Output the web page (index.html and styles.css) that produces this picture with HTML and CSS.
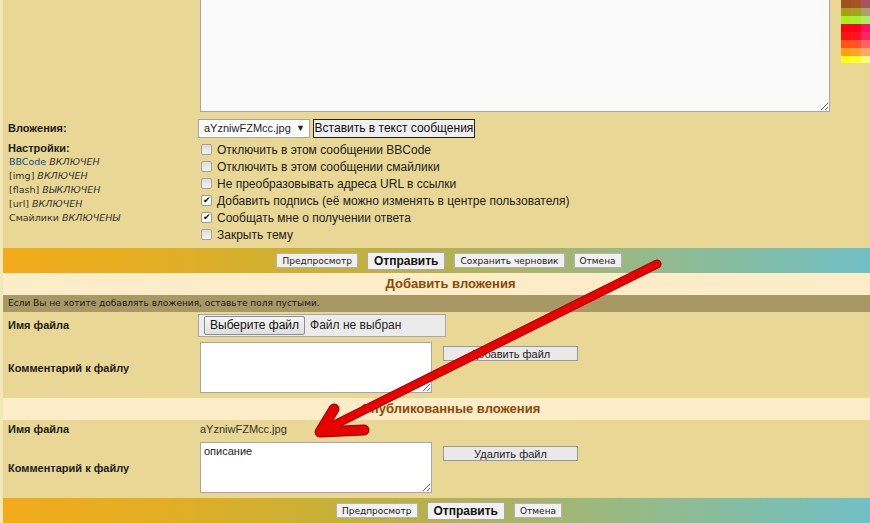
FILE: index.html
```html
<!DOCTYPE html>
<html lang="ru">
<head>
	<meta charset="utf-8">
	<title>Вложения</title>
	<link rel="stylesheet" href="styles.css">
</head>
<body>
<div class="page">

<!-- message box and colour palette -->
<div class="row post-row">
	<div class="label"></div>
	<textarea class="post-box"></textarea>
	<div class="palette">
		<span style="background:#a0501a"></span><span style="background:#a45226"></span><span style="background:#a4545e"></span>
		<span style="background:#a8a012"></span><span style="background:#a8a224"></span><span style="background:#aaa46a"></span>
		<span style="background:#a2f21e"></span><span style="background:#a4f22e"></span><span style="background:#a8f262"></span>
		<span style="background:#ff0010"></span><span style="background:#ff0024"></span><span style="background:#ff1060"></span>
		<span style="background:#ff1212"></span><span style="background:#ff1424"></span><span style="background:#ff2462"></span>
		<span style="background:#ff5214"></span><span style="background:#ff5426"></span><span style="background:#ff6464"></span>
		<span style="background:#ffa012"></span><span style="background:#ffa226"></span><span style="background:#ffa866"></span>
		<span style="background:#ffff12"></span><span style="background:#ffff28"></span><span style="background:#ffff74"></span>
	</div>
</div>

<div class="row attach-row">
	<div class="label">Вложения:</div>
	<span class="select">aYzniwFZMcc.jpg <span class="caret">▼</span></span>
	<button class="btn-insert">Вставить в текст сообщения</button>
</div>

<!-- post options -->
<div class="row options-row">
	<div class="label">
		<div>Настройки:</div>
		<ul class="status">
			<li><span class="link">BBCode</span> <i>ВКЛЮЧЕН</i></li>
			<li>[img] <i>ВКЛЮЧЕН</i></li>
			<li>[flash] <i>ВЫКЛЮЧЕН</i></li>
			<li>[url] <i>ВКЛЮЧЕН</i></li>
			<li>Смайлики <i>ВКЛЮЧЕНЫ</i></li>
		</ul>
	</div>
	<ul class="options">
		<li><span class="check"></span>Отключить в этом сообщении BBCode</li>
		<li><span class="check"></span>Отключить в этом сообщении смайлики</li>
		<li><span class="check"></span>Не преобразовывать адреса URL в ссылки</li>
		<li><span class="check checked">✔</span>Добавить подпись (её можно изменять в центре пользователя)</li>
		<li><span class="check checked">✔</span>Сообщать мне о получении ответа</li>
		<li><span class="check"></span>Закрыть тему</li>
	</ul>
</div>

<div class="bar">
	<button class="btn-small">Предпросмотр</button>
	<button class="btn-send">Отправить</button>
	<button class="btn-small">Сохранить черновик</button>
	<button class="btn-small">Отмена</button>
</div>

<!-- new attachment -->
<h3 class="cat">Добавить вложения</h3>
<div class="hint">Если Вы не хотите добавлять вложения, оставьте поля пустыми.</div>

<div class="row file-row">
	<div class="label">Имя файла</div>
	<div class="file-box"><span class="file-btn">Выберите файл</span>Файл не выбран</div>
</div>
<div class="row comment-row">
	<div class="label">Комментарий к файлу</div>
	<textarea class="comment-box"></textarea>
	<button class="btn-wide">Добавить файл</button>
</div>

<!-- posted attachments -->
<h3 class="cat">Опубликованные вложения</h3>
<div class="row name-row">
	<div class="label">Имя файла</div>
	<span class="file-name">aYzniwFZMcc.jpg</span>
</div>
<div class="row comment-row">
	<div class="label">Комментарий к файлу</div>
	<textarea class="comment-box">описание</textarea>
	<button class="btn-wide">Удалить файл</button>
</div>

<div class="bar">
	<button class="btn-small">Предпросмотр</button>
	<button class="btn-send">Отправить</button>
	<button class="btn-small">Отмена</button>
</div>

<!-- red annotation arrow drawn over the form -->
<svg class="arrow" viewBox="0 0 870 523" width="870" height="523">
	<g fill="none" stroke="#a00000" stroke-linecap="round" stroke-linejoin="round">
		<path d="M657 264 L322 431" stroke-width="9"/>
		<path d="M334 409 L320 432 L364 430" stroke-width="11"/>
	</g>
	<g fill="none" stroke="#e80000" stroke-linecap="round" stroke-linejoin="round">
		<path d="M657 264 L322 431" stroke-width="7"/>
		<path d="M334 409 L320 432 L364 430" stroke-width="9"/>
	</g>
</svg>

</div>
</body>
</html>
```

FILE: styles.css
```css
html, body {
	margin: 0;
	padding: 0;
}
body {
	background: #f1e7b8;
	overflow: hidden;
	font-family: "Liberation Sans", Arial, sans-serif;
	color: #222;
}
.page {
	position: relative;
	margin-left: 3px;
	width: 895px;
	background: #e8d795;
}
.row {
	display: flex;
	align-items: center;
}
.label {
	box-sizing: border-box;
	flex: 0 0 195px;
	padding-left: 5px;
	font-size: 11px;
	font-weight: bold;
	color: #1c1c1c;
}
button {
	font-family: "Liberation Sans", Arial, sans-serif;
	margin: 0;
	cursor: pointer;
}

/* message box */
.post-row {
	height: 112px;
	align-items: flex-start;
}
.post-box {
	box-sizing: border-box;
	margin: 0 0 0 2px;
	width: 630px;
	height: 112px;
	border: 1px solid #a6a6a6;
	border-top: none;
	background: #fafafa;
}
.palette {
	margin-left: 11px;
	display: grid;
	grid-template-columns: repeat(3, 10px);
	grid-auto-rows: 8px;
	height: 63px;
	overflow: hidden;
}

/* attachments select */
.attach-row {
	margin-top: 5px;
	height: 22px;
}
.select {
	box-sizing: border-box;
	display: flex;
	align-items: center;
	justify-content: space-between;
	width: 112px;
	height: 19px;
	padding: 0 4px 0 5px;
	border: 1px solid #a4a4a4;
	background: #fff;
	font-size: 11px;
	color: #222;
}
.caret {
	font-size: 9px;
}
.btn-insert {
	box-sizing: border-box;
	margin-left: 3px;
	width: 162px;
	height: 19px;
	padding: 0;
	border: 1px solid #222;
	background: #efefef;
	font-size: 12px;
	color: #111;
}

/* options */
.options-row {
	margin-top: 2px;
	height: 107px;
	align-items: flex-start;
}
.options-row .label {
	line-height: 14px;
}
.status {
	list-style: none;
	margin: 0;
	padding: 0 0 0 1px;
	font-family: "DejaVu Sans", Verdana, sans-serif;
	font-size: 9.5px;
	font-weight: normal;
	color: #333;
}
.status .link {
	color: #105289;
}
.options {
	list-style: none;
	margin: 0 0 0 3px;
	padding: 0;
	font-size: 12px;
	color: #222;
}
.options li {
	display: flex;
	align-items: center;
	height: 17px;
}
.check {
	box-sizing: border-box;
	display: inline-flex;
	align-items: center;
	justify-content: center;
	width: 11px;
	height: 11px;
	margin-right: 5px;
	border: 1px solid #a2a2a2;
	border-radius: 2px;
	background: linear-gradient(#dcdcdc, #f4f4f4);
	font-size: 9px;
	line-height: 1;
	color: #111;
}
.check.checked {
	background: #fff;
	border-color: #9a9a9a;
}

/* button bars */
.bar {
	display: flex;
	align-items: center;
	justify-content: center;
	gap: 9px;
	height: 25px;
	padding-right: 3px;
	background: linear-gradient(to right, #f2ab1a 0%, #e2ae24 18%, #ccb034 33%, #b8b04a 47%, #a6b46e 60%, #90bb92 75%, #80bdaa 85%, #6cc0cc 100%);
}
.btn-small {
	box-sizing: border-box;
	height: 15px;
	padding: 0 5px;
	border: 1px solid #b3b3b3;
	background: #f1f1f1;
	font-family: "DejaVu Sans", Verdana, sans-serif;
	font-size: 9px;
	color: #222;
}
.btn-send {
	box-sizing: border-box;
	height: 18px;
	padding: 0 6px;
	border: 1px solid #a9a9a9;
	background: #f1f1f1;
	font-size: 12px;
	font-weight: bold;
	color: #111;
}

/* section headers */
.cat {
	margin: 0;
	height: 22px;
	line-height: 22px;
	text-align: center;
	background: #fcecc7;
	color: #8b4a08;
	font-size: 13px;
	font-weight: bold;
}
.hint {
	box-sizing: border-box;
	height: 17px;
	line-height: 17px;
	padding-left: 5px;
	background: #a89964;
	font-family: "DejaVu Sans", Verdana, sans-serif;
	font-size: 9px;
	color: #1a1a1a;
}

/* attachment rows */
.file-row {
	height: 26px;
}
.file-box {
	box-sizing: border-box;
	display: flex;
	align-items: center;
	width: 248px;
	height: 23px;
	padding-left: 5px;
	border: 1px solid #a9a9a9;
	background: #ebebeb;
	font-size: 12px;
	color: #222;
}
.file-btn {
	box-sizing: border-box;
	display: inline-flex;
	align-items: center;
	height: 19px;
	padding: 0 5px;
	margin-right: 5px;
	border: 1px solid #8e8e8e;
	border-radius: 2px;
	background: linear-gradient(#f6f6f6, #dedede);
	color: #111;
}
.comment-row {
	height: 60px;
	align-items: flex-start;
}
.comment-box {
	box-sizing: border-box;
	margin: 4px 0 0 2px;
	width: 232px;
	height: 51px;
	padding: 2px 3px;
	border: 1px solid #a6a6a6;
	background: #fff;
	font-family: "Liberation Sans", Arial, sans-serif;
	font-size: 11px;
	color: #222;
	resize: both;
}
.comment-row .label {
	align-self: center;
}
.btn-wide {
	box-sizing: border-box;
	margin: 8px 0 0 11px;
	width: 135px;
	height: 15px;
	padding: 0;
	border: 1px solid #999;
	background: #e9e9e9;
	font-size: 11px;
	color: #222;
}
.name-row {
	height: 18px;
}
.file-name {
	margin-left: 2px;
	font-size: 11px;
	color: #333;
}

.arrow {
	position: absolute;
	top: 0;
	left: -3px;
	pointer-events: none;
}
```
